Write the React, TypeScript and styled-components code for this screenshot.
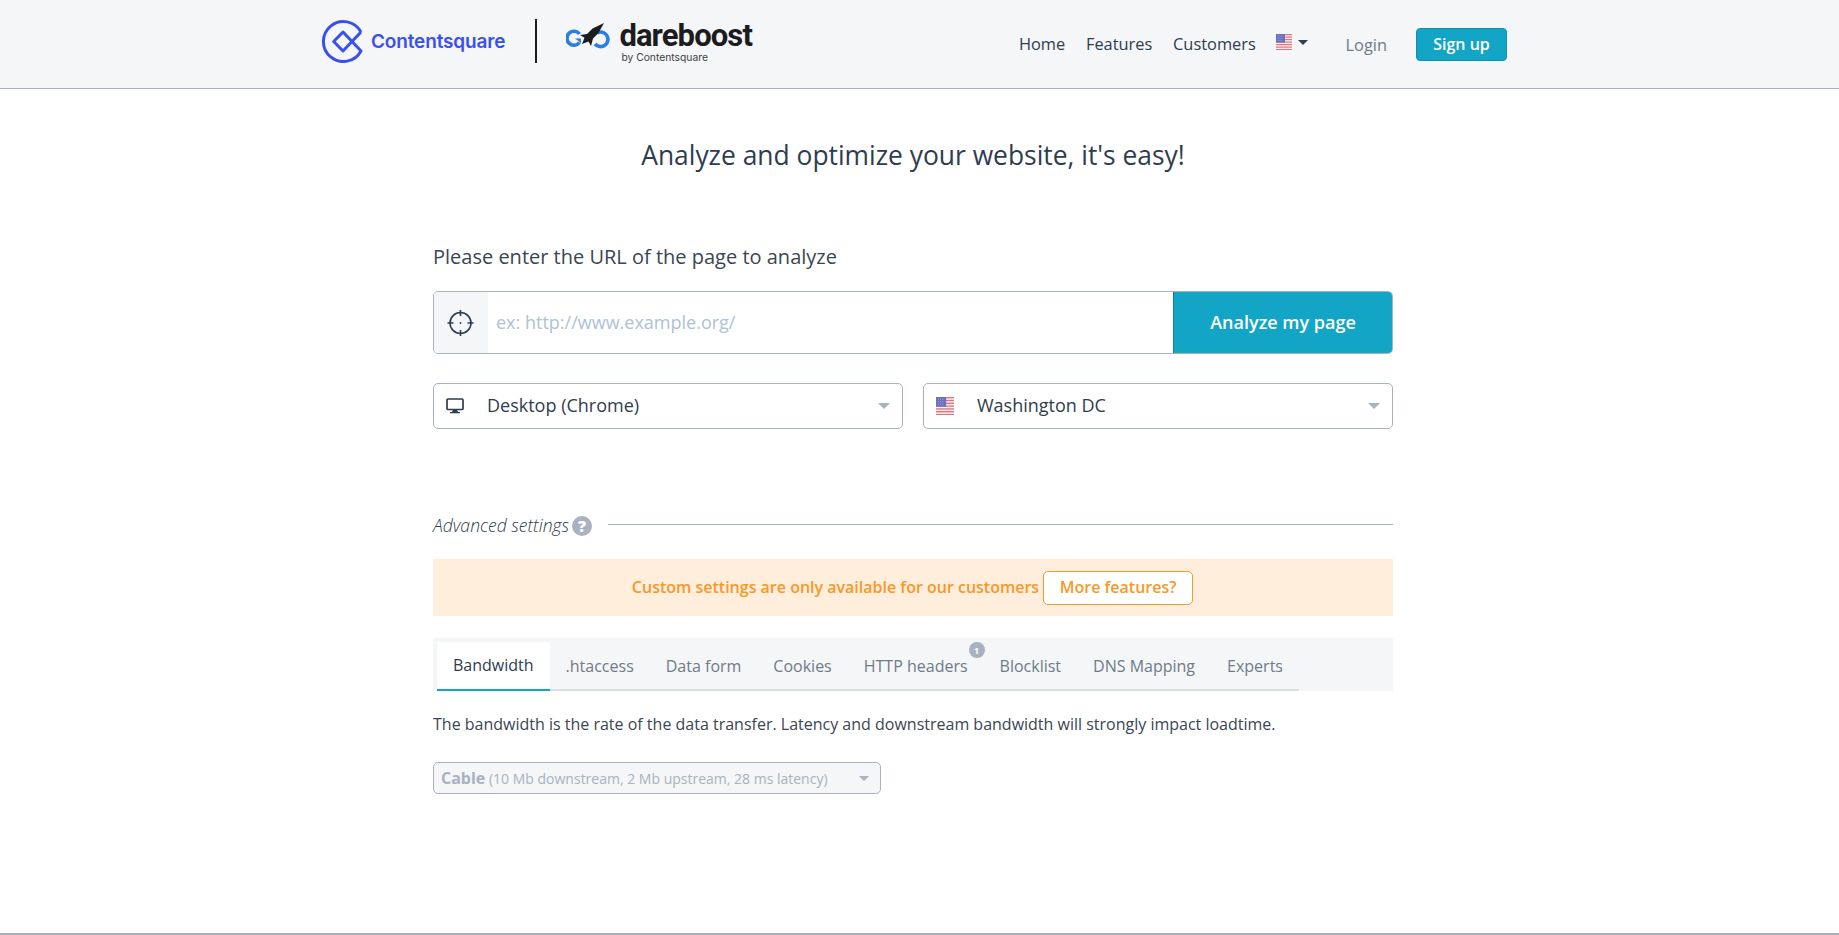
import React from "react";
import styled, { createGlobalStyle } from "styled-components";

const Global = createGlobalStyle`
  html, body { margin: 0; padding: 0; height: 935px; overflow: hidden; background: #fff; }
  body { font-family: "Open Sans", "Liberation Sans", sans-serif; color: #2e3d4f; }
  * { box-sizing: border-box; }
`;

const Page = styled.div`
  display: flex;
  flex-direction: column;
  height: 935px;
`;
const Header = styled.header`
  height: 89px;
  flex: none;
  background: #f4f6f8;
  border-bottom: 1px solid #a9b2c0;
  display: flex;
  align-items: center;
  justify-content: space-between;
  padding: 0 332px 0 321px;
`;
const Brands = styled.div`
  display: flex;
  align-items: center;
  margin-top: -6px;
`;
const CsBrand = styled.div`
  display: flex;
  align-items: center;
  gap: 7px;
  color: #3a4ff0;
  font-family: Inter, sans-serif;
  font-weight: 600;
  font-size: 19px;
  letter-spacing: -0.15px;
`;
const Divider = styled.div`
  width: 2px;
  height: 44px;
  background: #1d1d1f;
  margin: 0 29px 0 30px;
`;
const DbBrand = styled.div`
  display: flex;
  align-items: flex-start;
  gap: 9px;
`;
const DbText = styled.div`
  display: flex;
  flex-direction: column;
  padding-top: 2px;
`;
const DbName = styled.span`
  font-family: Roboto, sans-serif;
  font-weight: 700;
  font-size: 31px;
  line-height: 30px;
  color: #1c1c1e;
  letter-spacing: -0.9px;
`;
const DbSub = styled.span`
  font-family: Inter, sans-serif;
  font-size: 10.3px;
  line-height: 12px;
  color: #3f3f44;
  margin: 0 0 0 2px;
`;
const Nav = styled.nav`
  display: flex;
  align-items: center;
  font-size: 16.4px;
`;
const NavLink = styled.a`
  color: #2e3d4f;
  margin-right: 20.7px;
  line-height: 22px;
`;
const Lang = styled.div`
  display: flex;
  align-items: center;
  gap: 6px;
  margin-right: 37px;
  margin-top: -4px;
`;
const Caret = styled.span<{ $color: string; $w?: number }>`
  display: block;
  width: 0;
  height: 0;
  border-left: ${(p) => p.$w ?? 5}px solid transparent;
  border-right: ${(p) => p.$w ?? 5}px solid transparent;
  border-top: ${(p) => p.$w ?? 5}px solid ${(p) => p.$color};
`;
const Login = styled.a`
  color: #6f7b88;
  margin-right: 29px;
`;
const SignUp = styled.button`
  height: 33px;
  width: 91px;
  border: 1px solid #0f93ad;
  border-radius: 4px;
  background: #13a5c6;
  color: #fff;
  font: 600 16px "Open Sans", sans-serif;
  padding: 0;
`;
const Main = styled.main`
  flex: 1;
  width: 960px;
  margin-left: 433px;
`;
const Title = styled.h1`
  margin: 48px 0 0;
  font-size: 26.4px;
  line-height: 36px;
  font-weight: 400;
  text-align: center;
  color: #2e3d4f;
`;
const Label = styled.label`
  display: block;
  margin-top: 70px;
  font-size: 20px;
  line-height: 28px;
  color: #3a4653;
`;
const UrlGroup = styled.div`
  display: flex;
  height: 63px;
  margin-top: 20px;
  border: 1px solid #a9b2c0;
  border-radius: 5px;
  overflow: hidden;
`;
const Addon = styled.div`
  width: 54px;
  flex: none;
  background: #f4f6f8;
  display: flex;
  align-items: center;
  justify-content: center;
`;
const Placeholder = styled.div`
  flex: 1;
  padding: 0 0 2px 8px;
  display: flex;
  align-items: center;
  font-size: 18px;
  color: #aec2d6;
`;
const Analyze = styled.button`
  width: 219px;
  flex: none;
  border: 0;
  border-left: 1px solid #0f7f98;
  background: #13a5c6;
  color: #fff;
  font: 600 18px "Open Sans", sans-serif;
  padding: 0 0 2px;
`;
const SelectRow = styled.div`
  display: grid;
  grid-template-columns: 470px 470px;
  justify-content: space-between;
  margin-top: 29px;
`;
const SelectBox = styled.div`
  height: 46px;
  border: 1px solid #a9b2c0;
  border-radius: 5px;
  display: flex;
  align-items: center;
  padding: 0 12px;
  font-size: 18px;
  color: #2e3d4f;
`;
const SelectIcon = styled.span`
  width: 41px;
  flex: none;
  display: flex;
  align-items: center;
`;
const SelectText = styled.span`
  flex: 1;
  margin-top: -2px;
`;
const Advanced = styled.div`
  display: flex;
  align-items: center;
  margin-top: 84px;
  height: 26px;
`;
const AdvText = styled.em`
  font-size: 17.6px;
  font-weight: 300;
  color: #2e3d4f;
  margin-top: -2px;
`;
const Help = styled.span`
  width: 20px;
  height: 20px;
  border-radius: 50%;
  background: #a9b2c0;
  color: #fff;
  font-weight: 800;
  font-size: 16px;
  margin-left: 3px;
  display: flex;
  align-items: center;
  justify-content: center;
`;
const Rule = styled.div`
  flex: 1;
  height: 1px;
  background: #a9b2c0;
  margin: -3px 0 0 16px;
`;
const Alert = styled.div`
  margin-top: 20px;
  height: 57px;
  background: #feeedb;
  color: #f7982a;
  font-size: 16px;
  font-weight: 600;
  display: flex;
  align-items: center;
  justify-content: center;
  gap: 4px;
  padding-right: 1px;
`;
const AlertText = styled.span`
  margin-top: -2px;
`;
const More = styled.button`
  height: 34px;
  width: 150px;
  border: 1px solid #f7982a;
  border-radius: 5px;
  background: #fff;
  color: #f7982a;
  font: 600 16px "Open Sans", sans-serif;
  padding: 0 0 2px;
`;
const TabBar = styled.div`
  margin-top: 22px;
  height: 53px;
  background: #f4f6f8;
  padding: 4px 0 0 4px;
`;
const TabList = styled.div`
  display: flex;
  width: 862px;
  height: 49px;
  padding-bottom: 2px;
  border-bottom: 2px solid #d9dee1;
`;
const Tab = styled.div<{ $active?: boolean }>`
  position: relative;
  height: 49px;
  padding: 0 16px 2px;
  display: flex;
  align-items: center;
  font-size: 16px;
  background: ${(p) => (p.$active ? "#fff" : "transparent")};
  border-bottom: ${(p) => (p.$active ? "2px solid #13a5c6" : "0")};
  color: ${(p) => (p.$active ? "#2e3d4f" : "#6f7b88")};
`;
const Badge = styled.span`
  position: absolute;
  top: 0;
  right: -1px;
  width: 16px;
  height: 16px;
  border-radius: 50%;
  background: #a9b2c0;
  color: #fff;
  font-size: 9px;
  font-weight: 700;
  display: flex;
  align-items: center;
  justify-content: center;
`;
const Desc = styled.p`
  margin: 21px 0 0;
  font-size: 16px;
  line-height: 24px;
  color: #3a4653;
`;
const SmallSelect = styled.div`
  width: 448px;
  height: 32px;
  margin-top: 26px;
  background: #f4f6f8;
  border: 1px solid #a9b2c0;
  border-radius: 5px;
  display: flex;
  align-items: center;
  padding: 0 11px 0 7px;
  color: #a9b2c0;
`;
const SmallText = styled.span`
  flex: 1;
  font-size: 14px;
  & > b {
    font-size: 16px;
    font-weight: 700;
  }
`;
const Footer = styled.footer`
  flex: none;
  height: 2px;
  background: #a6afbd;
`;

const Flag = ({ w, h }: { w: number; h: number }) => (
  <svg width={w} height={h} viewBox="0 0 16 16">
    <rect width="16" height="16" fill="#f6f0f2" />
    {[0, 2.5, 5, 7.5, 10, 12.5, 15].map((y) => (
      <rect key={y} y={y} width="16" height="1.2" fill="#e5737f" />
    ))}
    <rect width="9" height="8.6" fill="#6a70bd" />
    <path d="M1.5 2h6M1.5 4.2h6M1.5 6.4h6" stroke="#a6a9dc" strokeWidth="0.8" strokeDasharray="1 1" />
  </svg>
);

const App = () => (
  <Page>
    <Global />
    <Header>
      <Brands>
        <CsBrand>
          <svg width="43" height="44" viewBox="0 0 43 44" fill="none">
            <path
              d="M40 13A20 20 0 1 0 40 32L22 13 12.7 22.5 22 32 40 13"
              stroke="#3a4ff0"
              strokeWidth="3"
              strokeLinejoin="round"
            />
          </svg>
          Contentsquare
        </CsBrand>
        <Divider />
        <DbBrand>
          <svg width="44" height="30" viewBox="0 0 44 30" fill="none" style={{ marginTop: 3 }}>
            <path d="M13.5 12A7 7 0 1 0 13.5 20.5" stroke="#2a7de1" strokeWidth="3.6" />
            <path d="M9 16.5h6v4.5z" fill="#2a7de1" />
            <path d="M31 11A7.3 7.3 0 1 1 29 22" stroke="#2a7de1" strokeWidth="3.6" />
            <path d="M38 1 26.5 6.5 21 12 14 13 18.5 15.8 16 22 22.5 19.5 25 24 27 16.5 32.5 11z" fill="#1c1c1e" />
          </svg>
          <DbText>
            <DbName>dareboost</DbName>
            <DbSub>by Contentsquare</DbSub>
          </DbText>
        </DbBrand>
      </Brands>
      <Nav>
        <NavLink>Home</NavLink>
        <NavLink>Features</NavLink>
        <NavLink>Customers</NavLink>
        <Lang>
          <Flag w={16} h={16} />
          <Caret $color="#2e3d4f" />
        </Lang>
        <Login>Login</Login>
        <SignUp>Sign up</SignUp>
      </Nav>
    </Header>
    <Main>
      <Title>Analyze and optimize your website, it's easy!</Title>
      <Label>Please enter the URL of the page to analyze</Label>
      <UrlGroup>
        <Addon>
          <svg width="28" height="28" viewBox="0 0 28 28" fill="none" stroke="#2e3d4f" strokeWidth="1.6">
            <circle cx="13.5" cy="14" r="10.5" />
            <path d="M13.5 1v6M13.5 21v6M.5 14h6M20.5 14h6" />
            <circle cx="13.5" cy="14" r="0.9" fill="#2e3d4f" stroke="none" />
          </svg>
        </Addon>
        <Placeholder>ex: http://www.example.org/</Placeholder>
        <Analyze>Analyze my page</Analyze>
      </UrlGroup>
      <SelectRow>
        <SelectBox>
          <SelectIcon>
            <svg width="18" height="16" viewBox="0 0 18 16" fill="none">
              <rect x="1" y="1" width="16" height="10.5" rx="1" stroke="#2e3d4f" strokeWidth="1.7" />
              <path d="M7 12h4l1 2h2v1.2H4V14h2z" fill="#2e3d4f" />
            </svg>
          </SelectIcon>
          <SelectText>Desktop (Chrome)</SelectText>
          <Caret $color="#a9b2c0" $w={6} />
        </SelectBox>
        <SelectBox>
          <SelectIcon>
            <Flag w={18} h={18} />
          </SelectIcon>
          <SelectText>Washington DC</SelectText>
          <Caret $color="#a9b2c0" $w={6} />
        </SelectBox>
      </SelectRow>
      <Advanced>
        <AdvText>Advanced settings</AdvText>
        <Help>?</Help>
        <Rule />
      </Advanced>
      <Alert>
        <AlertText>Custom settings are only available for our customers</AlertText>
        <More>More features?</More>
      </Alert>
      <TabBar>
        <TabList>
          <Tab $active>Bandwidth</Tab>
          <Tab>.htaccess</Tab>
          <Tab>Data form</Tab>
          <Tab>Cookies</Tab>
          <Tab>
            HTTP headers
            <Badge>1</Badge>
          </Tab>
          <Tab>Blocklist</Tab>
          <Tab>DNS Mapping</Tab>
          <Tab>Experts</Tab>
        </TabList>
      </TabBar>
      <Desc>The bandwidth is the rate of the data transfer. Latency and downstream bandwidth will strongly impact loadtime.</Desc>
      <SmallSelect>
        <SmallText>
          <b>Cable</b> (10 Mb downstream, 2 Mb upstream, 28 ms latency)
        </SmallText>
        <Caret $color="#a9b2c0" $w={5.5} />
      </SmallSelect>
    </Main>
    <Footer />
  </Page>
);

export default App;
